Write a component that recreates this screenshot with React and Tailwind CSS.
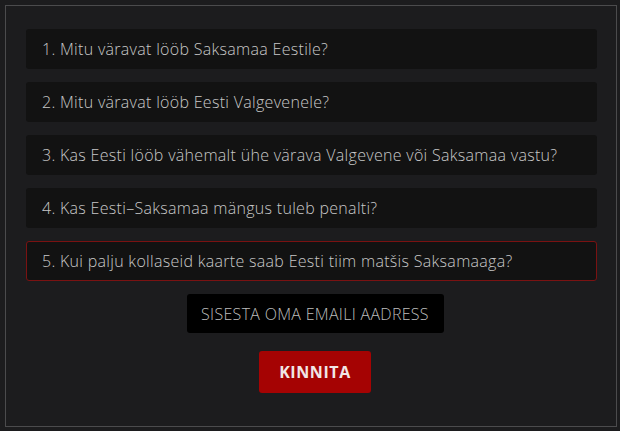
import React from "react";

const questions = [
    "1. Mitu väravat lööb Saksamaa Eestile?",
    "2. Mitu väravat lööb Eesti Valgevenele?",
    "3. Kas Eesti lööb vähemalt ühe värava Valgevene või Saksamaa vastu?",
    "4. Kas Eesti–Saksamaa mängus tuleb penalti?",
    "5. Kui palju kollaseid kaarte saab Eesti tiim matšis Saksamaaga?",
];

function Question({ text, active }) {
    return (
        <div
            className={
                active
                    ? "h-10 flex items-center pl-[15px] rounded-[3px] bg-[#121212] border border-[#7a1212] text-[16px] font-light tracking-[0.3px] text-[#c8c8c8]"
                    : "h-10 flex items-center pl-[15px] rounded-[3px] bg-[#121212] border border-transparent text-[16px] font-light tracking-[0.3px] text-[#c8c8c8]"
            }
        >
            {text}
        </div>
    );
}

export default function App() {
    return (
        <div className="w-[620px] h-[431px] bg-[#1c1c1e] pt-[5px] pl-[5px] font-['Open_Sans',sans-serif]">
            <div className="w-[612px] h-[422px] border border-[#4b4b4d] pt-[23px] pl-[20px] pr-[19px]">
                <div className="flex flex-col gap-[13px]">
                    {questions.map((q, i) => (
                        <Question key={i} text={q} active={i === 4} />
                    ))}
                </div>
                <div className="flex flex-col items-center mt-[13px] pl-[7px]">
                    <div className="w-[257px] h-[39px] bg-black rounded-[3px] flex items-center justify-center text-[16px] font-light tracking-[0.3px] text-[#bdbdbd]">
                        SISESTA OMA EMAILI AADRESS
                    </div>
                    <button className="mt-[18px] w-[112px] h-[42px] bg-[#a50303] rounded-[3px] text-[16px] font-bold text-[#f1e6e6] tracking-[0.6px]">
                        KINNITA
                    </button>
                </div>
            </div>
        </div>
    );
}
